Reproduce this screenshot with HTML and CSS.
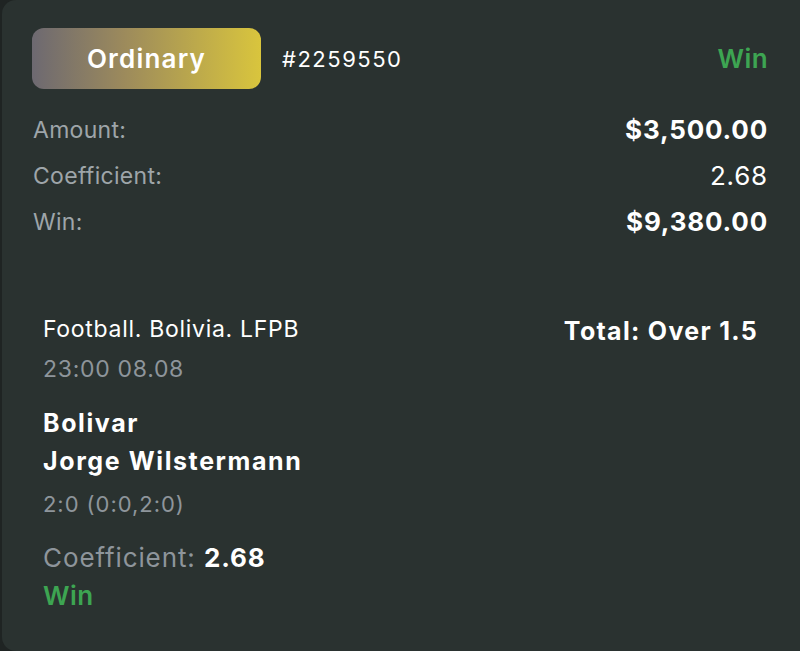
FILE: index.html
```html
<!DOCTYPE html>
<html>
<head>
<meta charset="utf-8">
<link rel="stylesheet" href="styles.css">
</head>
<body>
<div class="card">
  <div class="head">
    <div class="badge">Ordinary</div>
    <div class="num">#2259550</div>
    <div class="status">Win</div>
  </div>
  <div class="rows">
    <div class="row"><span class="label">Amount:</span><span class="val bold">$3,500.00</span></div>
    <div class="row"><span class="label">Coefficient:</span><span class="val">2.68</span></div>
    <div class="row"><span class="label">Win:</span><span class="val bold">$9,380.00</span></div>
  </div>
  <div class="event">
    <div class="event-top">
      <div class="league">Football. Bolivia. LFPB</div>
      <div class="market">Total: Over 1.5</div>
    </div>
    <div class="date">23:00 08.08</div>
    <div class="teams">
      <div>Bolivar</div>
      <div>Jorge Wilstermann</div>
    </div>
    <div class="score">2:0 (0:0,2:0)</div>
    <div class="coef"><span class="coef-label">Coefficient:</span> <b>2.68</b></div>
    <div class="result">Win</div>
  </div>
</div>
</body>
</html>
```
FILE: styles.css
```css
html, body {
  margin: 0;
  padding: 0;
  background: #1f2423;
}
body {
  font-family: Inter, "Noto Sans", sans-serif;
  color: #ffffff;
  width: 800px;
  height: 651px;
  overflow: hidden;
}
.card {
  box-sizing: border-box;
  height: 651px;
  margin-left: 2px;
  background: #2a3230;
  border-radius: 14px 0 0 14px;
  padding: 28px 32px 0 30px;
}
.head {
  display: flex;
  align-items: center;
  height: 61px;
}
.badge {
  width: 229px;
  height: 61px;
  border-radius: 12px;
  background: linear-gradient(90deg, #6d6971 0%, #9c8a5c 40%, #d9c53d 100%);
  display: flex;
  align-items: center;
  justify-content: center;
  font-size: 26px;
  font-weight: 600;
  letter-spacing: 1.2px;
}
.num {
  margin-left: 21px;
  font-size: 22px;
  letter-spacing: 1.5px;
  flex: 1;
}
.status {
  color: #3da552;
  font-size: 26px;
  font-weight: 600;
  letter-spacing: 0.4px;
}
.rows {
  margin-top: 24px;
  display: flex;
  flex-direction: column;
  gap: 13px;
}
.row {
  display: flex;
  justify-content: space-between;
  align-items: center;
  height: 33px;
}
.label {
  color: #9ea5a9;
  font-size: 23px;
  letter-spacing: 0.3px;
  margin-left: 1px;
}
.val {
  font-size: 26px;
  letter-spacing: 0.8px;
}
.val.bold {
  font-weight: 700;
}
.event {
  margin-top: 74px;
  padding: 0 10px 0 11px;
}
.event-top {
  display: flex;
  justify-content: space-between;
  align-items: center;
  height: 34px;
}
.league {
  font-size: 23px;
  letter-spacing: 0.7px;
}
.market {
  margin-top: 4px;
  font-size: 25px;
  font-weight: 700;
  letter-spacing: 1.3px;
}
.date {
  margin-top: 8px;
  line-height: 30px;
  color: #8e959b;
  font-size: 23px;
  letter-spacing: 0.7px;
}
.teams {
  margin-top: 20px;
  font-size: 25px;
  font-weight: 700;
  line-height: 38px;
  letter-spacing: 1.6px;
}
.score {
  margin-top: 9px;
  line-height: 30px;
  color: #8e959b;
  font-size: 22px;
  letter-spacing: 0.95px;
}
.coef {
  margin-top: 22px;
  line-height: 34px;
  font-size: 26px;
  letter-spacing: 0.9px;
}
.coef-label {
  color: #8e959b;
}
.coef b {
  font-weight: 700;
}
.result {
  margin-top: 4px;
  line-height: 34px;
  color: #3da552;
  font-size: 26px;
  font-weight: 600;
  letter-spacing: 0.5px;
}
```
